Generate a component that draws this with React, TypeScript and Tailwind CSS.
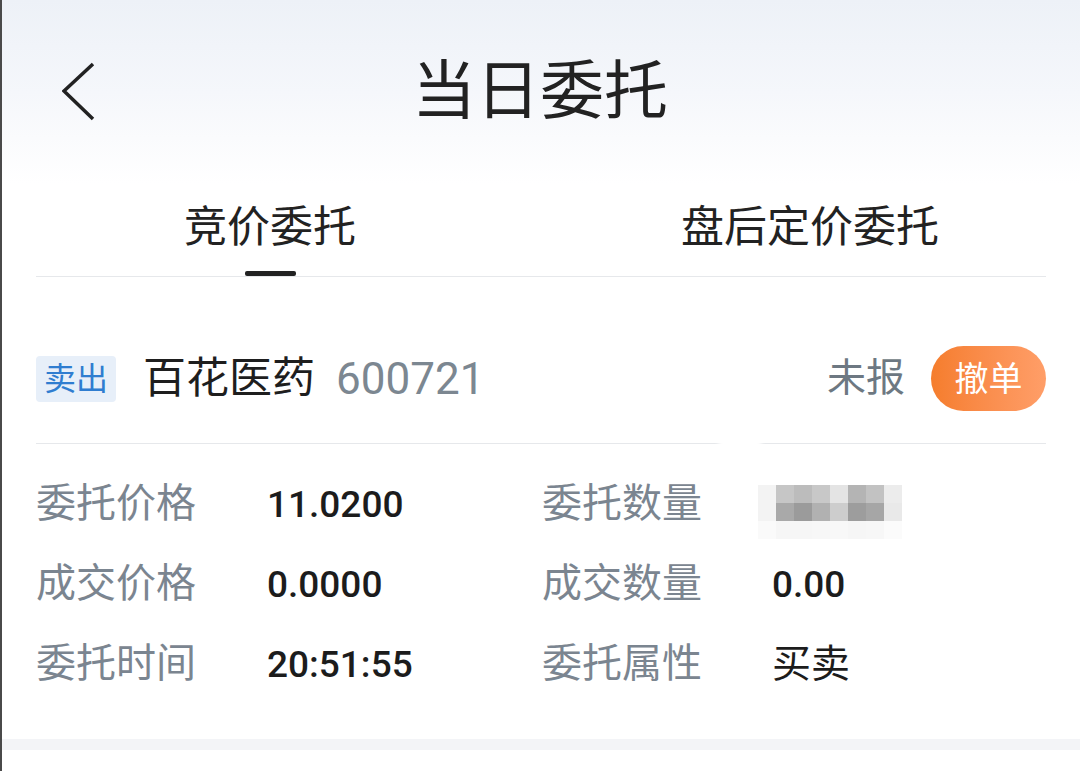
import React from "react";

const font = { fontFamily: 'Roboto, "Noto Sans CJK SC", sans-serif' };

const blocks: string[][] = [
  ["#f3f3f3", "#c6c6c6", "#bcbcbc", "#c8c8c8", "#e4e4e4", "#b4b4b4", "#c2c2c2", "#ececec"],
  ["#f3f3f3", "#a9a9a9", "#9b9b9b", "#b1b1b1", "#cdcdcd", "#9d9d9d", "#a6a6a6", "#e9e9e9"],
  ["#fafafa", "#f6f6f6", "#f6f6f6", "#f7f7f7", "#f8f8f8", "#f6f6f6", "#f7f7f7", "#fbfbfb"],
];

function Label({ children }: { children: React.ReactNode }) {
  return <div className="text-[40px] leading-none text-[#7b8590]">{children}</div>;
}
function Value({ children }: { children: React.ReactNode }) {
  return <div className="text-[37px] leading-none font-medium text-[#1c1c1c]">{children}</div>;
}

export default function App() {
  return (
    <div
      className="relative w-[1080px] h-[771px] bg-white border-l-2 border-[#4a4a4a] overflow-hidden"
      style={font}
    >
      {/* Header */}
      <div className="h-[184px] -ml-[2px] grid grid-cols-[1fr_auto_1fr] items-center bg-gradient-to-b from-[#edf1f7] via-[#f5f7fb] to-white">
        <div className="pl-[62px] flex items-center">
          <svg width="34" height="60" viewBox="0 0 34 60" fill="none">
            <polyline points="31,2 2,29 31,57" stroke="#222" strokeWidth="3.5" strokeLinecap="butt" strokeLinejoin="miter" />
          </svg>
        </div>
        <div className="text-[64px] leading-none text-[#222]">当日委托</div>
        <div />
      </div>

      {/* Tabs */}
      <div className="-ml-[2px] grid grid-cols-2">
        <div className="flex flex-col items-center">
          <div className="pt-[22px] text-[43px] leading-none text-[#222]">竞价委托</div>
          <div className="mt-[22px] h-[5px] w-[51px] rounded-[2px] bg-[#222]" />
        </div>
        <div className="flex flex-col items-center">
          <div className="pt-[22px] text-[43px] leading-none text-[#222]">盘后定价委托</div>
          <div className="mt-[22px] h-[5px] w-[51px]" />
        </div>
      </div>
      <div className="mx-[34px] h-px bg-[#e6e8eb]" />

      {/* Stock row */}
      <div className="px-[34px] pt-[69px] pb-[32px] flex items-center">
        <div className="h-[46px] px-[8px] rounded-[4px] bg-[#e7eff9] flex items-center text-[32px] leading-none text-[#2f7dd0]">
          卖出
        </div>
        <div className="ml-[27px] text-[43px] leading-none text-[#1e1e1e]">百花医药</div>
        <div className="ml-[21px] text-[44px] leading-none text-[#7c8791]">600721</div>
        <div className="flex-1" />
        <div className="text-[39px] leading-none text-[#6d7882]">未报</div>
        <div className="ml-[26px] h-[65px] w-[115px] rounded-full bg-gradient-to-r from-[#f57d2c] to-[#ff9e68] flex items-center justify-center text-[34px] leading-none text-white">
          撤单
        </div>
      </div>
      <div className="mx-[34px] h-px bg-[#e6e8eb]" />

      {/* Details */}
      <div className="px-[34px] pt-[20px] pb-[35px] grid grid-cols-[231px_275px_230px_1fr] auto-rows-[80px] items-center">
        <Label>委托价格</Label>
        <Value>11.0200</Value>
        <Label>委托数量</Label>
        <div className="flex flex-col -ml-[14px] mt-[16px]">
          {blocks.map((row, i) => (
            <div key={i} className="flex">
              {row.map((c, j) => (
                <div key={j} className="w-[18px] h-[18px]" style={{ background: c }} />
              ))}
            </div>
          ))}
        </div>

        <Label>成交价格</Label>
        <Value>0.0000</Value>
        <Label>成交数量</Label>
        <Value>0.00</Value>

        <Label>委托时间</Label>
        <Value>20:51:55</Value>
        <Label>委托属性</Label>
        <div className="text-[39px] leading-none text-[#1c1c1c]">买卖</div>
      </div>

      {/* Bottom band */}
      <div className="-ml-[2px] h-[11px] bg-[#f3f4f7]" />

      {/* blur smear overlay */}
      <div className="absolute left-[716px] top-[438px] w-[44px] h-[14px] rounded-full bg-white blur-[2px]" />
    </div>
  );
}
